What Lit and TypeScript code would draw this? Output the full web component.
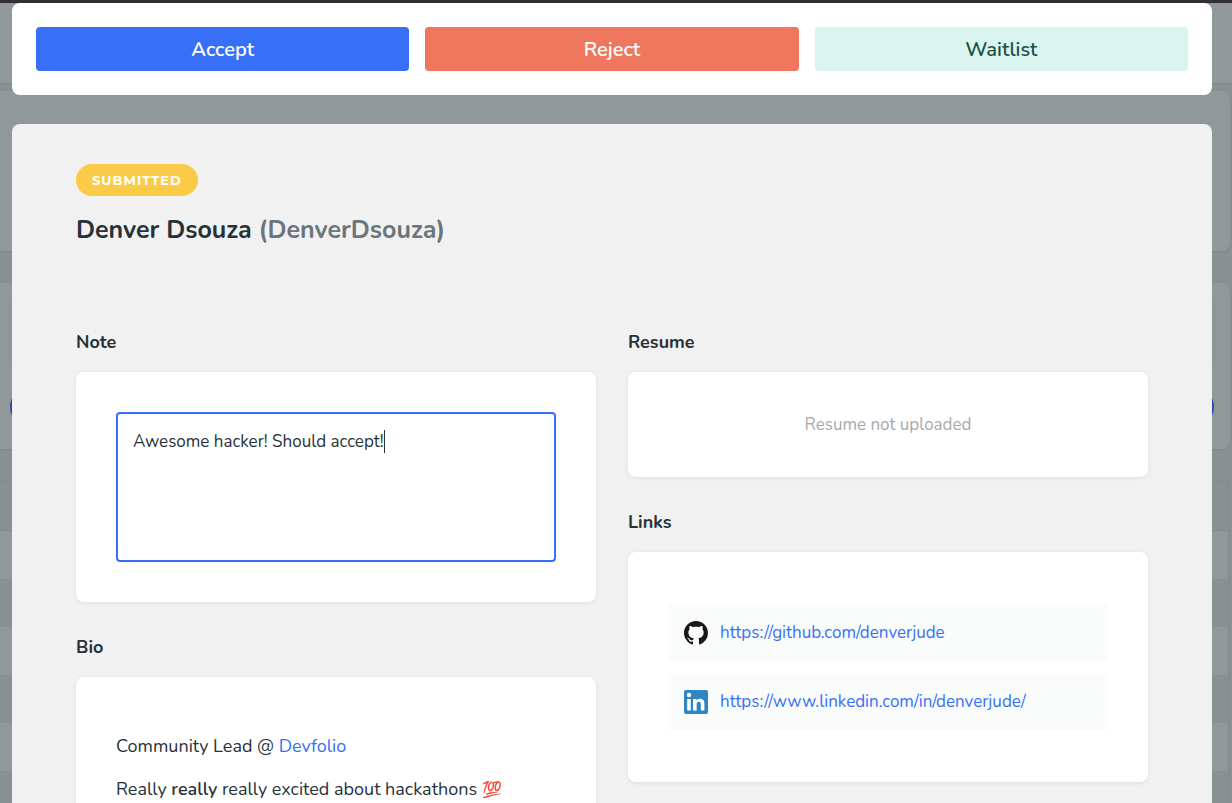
import { LitElement, html, css } from "lit";
import { customElement, state, query } from "lit/decorators.js";
import { styleMap } from "lit/directives/style-map.js";

/** Dimmed dashboard that stays visible around the edges of the review dialog. */
@customElement("dimmed-dashboard")
class DimmedDashboard extends LitElement {
  static styles = css`
    :host {
      display: block;
      height: 100%;
      overflow: hidden;
      background: #889092;
    }
    .top {
      height: 80px;
      border-top: 3px solid #323035;
      background: #90989a;
      box-shadow: 0 1px 2px #7e8789;
    }
    .content {
      display: flex;
      flex-direction: column;
      gap: 32px;
      padding: 8px 2px 0 0;
    }
    .card {
      box-sizing: border-box;
      height: 160px;
      border-radius: 0 8px 8px 0;
      background: #90989a;
      box-shadow: 0 1px 2px #7e8789;
    }
    .steps {
      display: flex;
      flex-direction: column;
      gap: 23px;
      height: 166px;
      padding: 17px 16px 0 10px;
    }
    .panel {
      height: 64px;
      border-radius: 4px;
      box-shadow: 0 0 2px #838c8e;
    }
    .dots {
      display: flex;
      justify-content: space-between;
    }
    .dot {
      width: 40px;
      height: 40px;
      border-radius: 50%;
      background: #264ba8;
    }
    .table {
      margin-right: 1px;
      border: 1px solid #80898b;
      border-left: 0;
      border-radius: 0 4px 0 0;
    }
    .row {
      height: 48px;
    }
    .row:nth-child(even) {
      background: #90989a;
    }
    .head {
      border-bottom: 1px solid #80898b;
    }
  `;

  render() {
    return html`
      <div class="top"></div>
      <div class="content">
        <div class="card"></div>
        <div class="card steps">
          <div class="panel"></div>
          <div class="dots"><span class="dot"></span><span class="dot"></span></div>
        </div>
        <div class="table">
          <div class="row head"></div>
          ${Array.from({ length: 8 }, () => html`<div class="row"></div>`)}
        </div>
      </div>
    `;
  }
}

@customElement("app-root")
class AppRoot extends LitElement {
  static styles = css`
    :host {
      display: block;
      position: relative;
      height: 100vh;
      overflow: hidden;
      font-family: Nunito, Lato, "Noto Sans", sans-serif;
      font-size: 17px;
      line-height: 25px;
      color: #273238;
    }
    *,
    *::before {
      box-sizing: border-box;
    }
    .overlay {
      position: absolute;
      inset: 0;
      overflow-y: auto;
      scrollbar-width: none;
      padding: 3px 20px 0 12px;
    }
    .actions {
      display: grid;
      grid-template-columns: repeat(3, 1fr);
      gap: 16px;
      padding: 24px;
      margin-bottom: 29px;
      border-radius: 8px;
      background: #fff;
    }
    .action {
      height: 44px;
      padding: 2px 0 0;
      border: 0;
      border-radius: 4px;
      font: 600 20px/28px Nunito, Lato, sans-serif;
      color: #fff;
      cursor: pointer;
    }
    .accept {
      background: #3770f7;
    }
    .reject {
      background: #ee775d;
    }
    .waitlist {
      background: #daf5f0;
      color: #1d5148;
    }
    .sheet {
      padding: 40px 64px 64px;
      border-radius: 8px 8px 0 0;
      background: #f1f1f1;
    }
    .badge {
      display: inline-block;
      padding: 0 16px;
      border-radius: 16px;
      background: #facb48;
      color: #fff;
      font: 700 13px/32px Montserrat, Lato, sans-serif;
      letter-spacing: 1px;
      vertical-align: top;
    }
    .name {
      margin: 16px 0 81px;
      font-size: 25px;
      line-height: 36px;
      font-weight: 700;
    }
    .handle {
      color: #6a767c;
    }
    .columns {
      display: grid;
      grid-template-columns: 1fr 1fr;
      gap: 32px;
      align-items: start;
    }
    .column {
      display: flex;
      flex-direction: column;
      gap: 32px;
    }
    .title {
      display: block;
      margin: 0 0 16px;
      font-size: 18px;
      line-height: 27px;
      font-weight: 700;
    }
    .card {
      padding: 40px;
      border-radius: 8px;
      background: #fff;
      box-shadow: 0 1px 4px rgba(0, 0, 0, 0.08);
    }
    .editor {
      position: relative;
    }
    .note {
      display: block;
      width: 100%;
      height: 150px;
      padding: 15px;
      border: 2px solid #3770f7;
      border-radius: 4px;
      outline: 0;
      resize: none;
      background: #fff;
      color: inherit;
      font: inherit;
      caret-color: transparent;
    }
    .caret {
      position: absolute;
      top: 18px;
      width: 1px;
      height: 23px;
      background: #273238;
      pointer-events: none;
    }
    .empty {
      margin: 0;
      text-align: center;
      color: #a9a9a9;
    }
    .links {
      display: flex;
      flex-direction: column;
      gap: 12px;
      margin: 0;
      padding: 12px 0;
      list-style: none;
    }
    .link {
      display: flex;
      align-items: center;
      gap: 12px;
      padding: 16px;
      background: #fafcfc;
    }
    .icon {
      display: block;
      width: 24px;
      height: 24px;
      flex: none;
    }
    a {
      color: #3770f7;
      text-decoration: none;
    }
    .bio {
      font-size: 18px;
    }
    .bio p {
      margin: 17px 0 18px;
    }
    .bio strong {
      font-weight: 600;
    }
    .emoji {
      font-size: 16px;
    }
  `;

  @state() private note = "Awesome hacker! Should accept!";
  @state() private caretX = 0;
  @query(".note") private field!: HTMLTextAreaElement;

  firstUpdated() {
    this.field.focus();
    this.field.setSelectionRange(this.note.length, this.note.length);
    this.placeCaret();
  }

  private placeCaret() {
    const context = document.createElement("canvas").getContext("2d");
    if (!context) return;
    context.font = getComputedStyle(this.field).font;
    const before = this.field.value.slice(0, this.field.selectionEnd);
    this.caretX = Math.round(17 + context.measureText(before).width);
  }

  private onInput() {
    this.note = this.field.value;
    this.placeCaret();
  }

  render() {
    return html`
      <dimmed-dashboard aria-hidden="true"></dimmed-dashboard>
      <div class="overlay" role="dialog" aria-labelledby="applicant">
        <div class="actions">
          <button class="action accept">Accept</button>
          <button class="action reject">Reject</button>
          <button class="action waitlist">Waitlist</button>
        </div>
        <main class="sheet">
          <span class="badge">SUBMITTED</span>
          <h1 class="name" id="applicant">
            Denver Dsouza <span class="handle">(DenverDsouza)</span>
          </h1>
          <div class="columns">
            <div class="column">
              <section>
                <label class="title" for="note">Note</label>
                <div class="card">
                  <div class="editor">
                    <textarea
                      class="note"
                      id="note"
                      spellcheck="false"
                      .value=${this.note}
                      @input=${this.onInput}
                      @keyup=${this.placeCaret}
                      @click=${this.placeCaret}
                    ></textarea>
                    <span class="caret" style=${styleMap({ left: `${this.caretX}px` })}></span>
                  </div>
                </div>
              </section>
              <section>
                <h2 class="title">Bio</h2>
                <div class="card bio">
                  <p>Community Lead @ <a href="#devfolio">Devfolio</a></p>
                  <p>
                    Really <strong>really</strong> really excited about hackathons
                    <span class="emoji">💯</span>
                  </p>
                </div>
              </section>
            </div>
            <div class="column">
              <section>
                <h2 class="title">Resume</h2>
                <div class="card"><p class="empty">Resume not uploaded</p></div>
              </section>
              <section>
                <h2 class="title">Links</h2>
                <div class="card">
                  <ul class="links">
                    <li class="link">
                      <svg class="icon" viewBox="0 0 16 16" aria-hidden="true">
                        <path
                          fill="#191717"
                          d="M8 0C3.58 0 0 3.58 0 8c0 3.54 2.29 6.53 5.47 7.59.4.07.55-.17.55-.38 0-.19-.01-.82-.01-1.49-2.01.37-2.53-.49-2.69-.94-.09-.23-.48-.94-.82-1.13-.28-.15-.68-.52-.01-.53.63-.01 1.08.58 1.23.82.72 1.21 1.87.87 2.33.66.07-.52.28-.87.51-1.07-1.78-.2-3.64-.89-3.64-3.95 0-.87.31-1.59.82-2.15-.08-.2-.36-1.02.08-2.12 0 0 .67-.21 2.2.82.64-.18 1.32-.27 2-.27s1.36.09 2 .27c1.53-1.04 2.2-.82 2.2-.82.44 1.1.16 1.92.08 2.12.51.56.82 1.27.82 2.15 0 3.07-1.87 3.75-3.65 3.95.29.25.54.73.54 1.48 0 1.07-.01 1.93-.01 2.2 0 .21.15.46.55.38A8.01 8.01 0 0 0 16 8c0-4.42-3.58-8-8-8z"
                        />
                      </svg>
                      <a href="https://github.com/denverjude">https://github.com/denverjude</a>
                    </li>
                    <li class="link">
                      <svg class="icon" viewBox="0 0 24 24" aria-hidden="true">
                        <rect width="24" height="24" rx="2" fill="#2f85c1" />
                        <circle cx="5" cy="5" r="2.2" fill="#fff" />
                        <path
                          fill="#fff"
                          d="M3.2 9h3.600v11.400H3.200zM9 9h3.400v1.600C12.900 9.700 14 8.700 15.900 8.700c3.600 0 4.500 2.300 4.500 5.400v6.300h-3.600v-5.600c0-1.300 0-3-1.900-3s-2.200 1.400-2.200 2.900v5.700H9z"
                        />
                      </svg>
                      <a href="https://www.linkedin.com/in/denverjude/">https://www.linkedin.com/in/denverjude/</a>
                    </li>
                  </ul>
                </div>
              </section>
            </div>
          </div>
        </main>
      </div>
    `;
  }
}
